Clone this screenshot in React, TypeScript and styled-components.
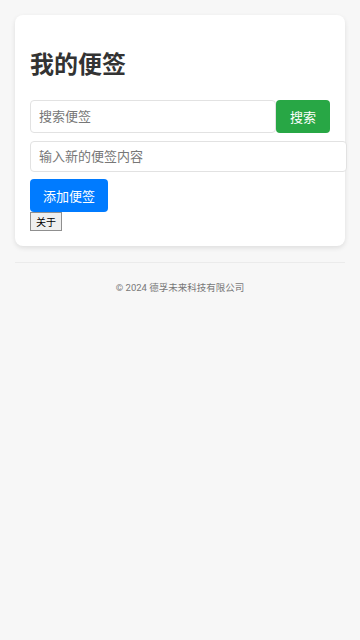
import React from "react";
import styled, { createGlobalStyle } from "styled-components";

const Global = createGlobalStyle`
  html, body { margin: 0; padding: 0; background: #f7f7f7; }
  body { font-family: Roboto, "Noto Sans CJK SC", sans-serif; color: #333; }
  * { font-family: Roboto, "Noto Sans CJK SC", sans-serif; }
`;

const Page = styled.div`
  padding: 15px;
`;

const Card = styled.div`
  background: #fff;
  border-radius: 8px;
  box-shadow: 0 2px 5px rgba(0, 0, 0, 0.1);
  padding: 15px 15px 15px;
`;

const Title = styled.h1`
  font-size: 24px;
  line-height: 31px;
  font-weight: 700;
  color: #333;
  margin: 20px 0 19px;
`;

const SearchRow = styled.div`
  display: flex;
`;

const Input = styled.input<{ $wide?: boolean }>`
  box-sizing: border-box;
  height: ${(p) => (p.$wide ? 31 : 33)}px;
  border: 1px solid #e2e2e2;
  border-radius: 4px;
  padding: 0 8px;
  font-size: 13px;
  color: #333;
  outline: none;
  ${(p) => (p.$wide ? "width: calc(100% + 17px); display: block; margin-top: 8px;" : "flex: 1; min-width: 0;")}
  &::placeholder { color: #777; }
`;

const Button = styled.button<{ $color: string; $w: number }>`
  box-sizing: border-box;
  width: ${(p) => p.$w}px;
  height: 33px;
  border: none;
  border-radius: 4px;
  background: ${(p) => p.$color};
  color: #fff;
  font-size: 13px;
  padding: 0;
  cursor: pointer;
`;

const AddButton = styled(Button)`
  display: block;
  margin-top: 7px;
`;

const AboutButton = styled.button`
  display: block;
  box-sizing: border-box;
  width: 32px;
  height: 19px;
  padding: 0;
  font-size: 10px;
  background: #efefef;
  border: 1px solid #8f8f8f;
  border-radius: 0;
  color: #000;
`;

const Footer = styled.footer`
  margin-top: 16px;
  border-top: 1px solid #ebebeb;
  padding-top: 17px;
  text-align: center;
  font-size: 9.5px;
  color: #777;
`;

export default function App() {
  return (
    <>
      <Global />
      <Page>
        <Card>
          <Title>我的便签</Title>
          <SearchRow>
            <Input placeholder="搜索便签" />
            <Button $color="#28a745" $w={54}>搜索</Button>
          </SearchRow>
          <Input $wide placeholder="输入新的便签内容" />
          <AddButton $color="#007bff" $w={78}>添加便签</AddButton>
          <AboutButton>关于</AboutButton>
        </Card>
        <Footer>© 2024 德孚未来科技有限公司</Footer>
      </Page>
    </>
  );
}
